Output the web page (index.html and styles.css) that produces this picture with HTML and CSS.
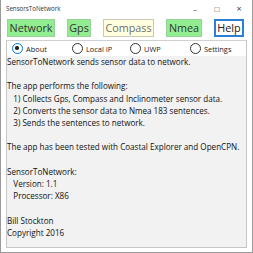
FILE: index.html
```html
<!DOCTYPE html>
<html>
<head>
<meta charset="utf-8">
<title>SensorsToNetwork</title>
<link rel="stylesheet" href="styles.css">
</head>
<body>

<div class="window">

<!-- barre de titre -->
<div class="titlebar">
	<span class="title">SensorsToNetwork</span>
	<span class="ctl min">&#8211;</span>
	<span class="ctl max">&#9633;</span>
	<span class="ctl close">&#215;</span>
</div>

<!-- boutons -->
<div class="buttons">
	<span class="btn green w-network">Network</span>
	<span class="btn green w-gps">Gps</span>
	<span class="btn yellow w-compass">Compass</span>
	<span class="btn green w-nmea">Nmea</span>
	<span class="btn help w-help">Help</span>
</div>

<!-- panneau -->
<div class="panel">
	<div class="radios">
		<label class="radio checked"><i></i>About</label>
		<label class="radio"><i></i>Local IP</label>
		<label class="radio"><i></i>UWP</label>
		<label class="radio"><i></i>Settings</label>
	</div>
<div class="about">SensorToNetwork sends sensor data to network.

The app performs the following:
   1) Collects Gps, Compass and Inclinometer sensor data.
   2) Converts the sensor data to Nmea 183 sentences.
   3) Sends the sentences to network.

The app has been tested with Coastal Explorer and OpenCPN.

SensorToNetwork:
   Version: 1.1
   Processor: X86

Bill Stockton
Copyright 2016</div>
</div>

</div>

</body>
</html>
```

FILE: styles.css
```css
html, body {margin:0; padding:0;}
body {background-color:white; font-family:"Open Sans", "Noto Sans", sans-serif; color:#111;}

.window {width:253px; height:253px; box-sizing:border-box; border:1px solid #9a9a9a; border-top:none;
	background-color:white; display:flex; flex-direction:column;}

.titlebar {height:17px; display:flex; align-items:center; padding-left:5px; padding-right:2px;
	font-size:6.2px; color:#333;}
.title {flex:1;}
.ctl {width:22px; text-align:center; font-size:8px; color:#444;}
.ctl.close {font-size:9px;}

.buttons {display:flex; justify-content:space-between; padding:2px 8px 0 6px; height:19px;}
.btn {box-sizing:border-box; height:18px; line-height:16px; font-size:10.8px; text-align:center;
	border:1px solid #9ad29a;}
.green {background-color:#90ee90; color:#333;}
.yellow {background-color:#ffffe0; border-color:#c8c8b4; color:#6e6e6e;}
.help {background-color:white; border:2px solid #2b7fd4; line-height:14px; color:#222;}
.w-network {width:48px;}
.w-gps {width:24px;}
.w-compass {width:51px;}
.w-nmea {width:36px;}
.w-help {width:30px;}

.panel {margin:2px 5px 4px 5px; flex:1; border:1px solid #c6c6c6; border-top-color:#d0d0d0;
	background-color:#f2f2f2; display:flex; flex-direction:column;}

.radios {display:grid; grid-template-columns:60px 58px 60px 1fr; padding-left:5px; height:15px;
	align-items:center; background-color:white;}
.radio {display:flex; align-items:center; font-size:7.4px; color:#222;}
.radio i {box-sizing:border-box; width:11px; height:11px; border:1.4px solid #333; border-radius:50%;
	margin-right:3px; position:relative;}
.radio.checked i {border-color:#0078d7;}
.radio.checked i:after {content:""; position:absolute; left:2.4px; top:2.4px; width:3.4px; height:3.4px;
	border-radius:50%; background-color:#222;}

.about {white-space:pre; font-size:8.1px; line-height:12.2px; color:#111;}
```
